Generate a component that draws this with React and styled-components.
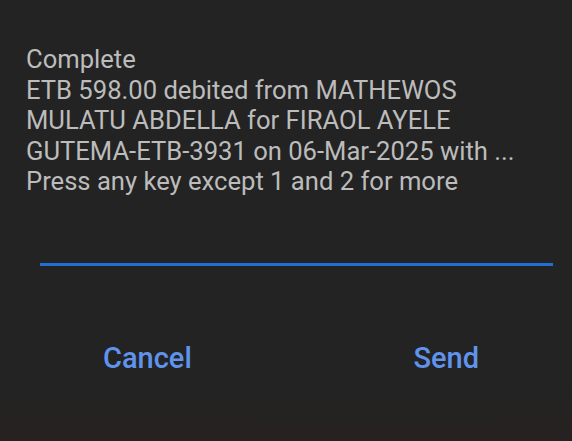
import React from 'react';
import styled, { createGlobalStyle } from 'styled-components';

const GlobalStyle = createGlobalStyle`
    html, body {
        margin: 0;
        padding: 0;
        background: #232323;
    }
    body {
        font-family: Roboto, "Noto Sans", sans-serif;
    }
`;

const Dialog = styled.div`
    width: 572px;
    height: 441px;
    box-sizing: border-box;
    padding-top: 44px;
    background: linear-gradient(180deg, #232323 0%, #232323 86%, #262221 100%);
    display: flex;
    flex-direction: column;
`;

const Message = styled.div`
    padding-left: 26px;
    color: #bcbcbc;
    font-size: 25.6px;
    line-height: 30.5px;
`;

const InputLine = styled.div`
    margin: 66px 19px 0 40px;
    height: 3px;
    background: #1f6fd4;
`;

const Actions = styled.div`
    display: flex;
    align-items: center;
    padding: 0 93px 0 103px;
    margin-top: 76px;
`;

const Action = styled.button`
    background: none;
    border: none;
    padding: 0;
    color: #5f93ec;
    font-family: Roboto, sans-serif;
    font-weight: 500;
    font-size: 29px;
    line-height: 32px;
    margin-left: ${p => (p.$right ? 'auto' : '0')};
    cursor: pointer;
`;

const lines = [
    'Complete',
    'ETB 598.00 debited from MATHEWOS',
    'MULATU ABDELLA for FIRAOL AYELE',
    'GUTEMA-ETB-3931 on 06-Mar-2025 with ...',
    'Press any key except 1 and 2 for more',
];

const App = () => {
    return (
        <>
            <GlobalStyle />
            <Dialog>
                <Message>
                    {lines.map((l) => (
                        <div key={l}>{l}</div>
                    ))}
                </Message>
                <InputLine />
                <Actions>
                    <Action>Cancel</Action>
                    <Action $right>Send</Action>
                </Actions>
            </Dialog>
        </>
    );
};

export default App;
